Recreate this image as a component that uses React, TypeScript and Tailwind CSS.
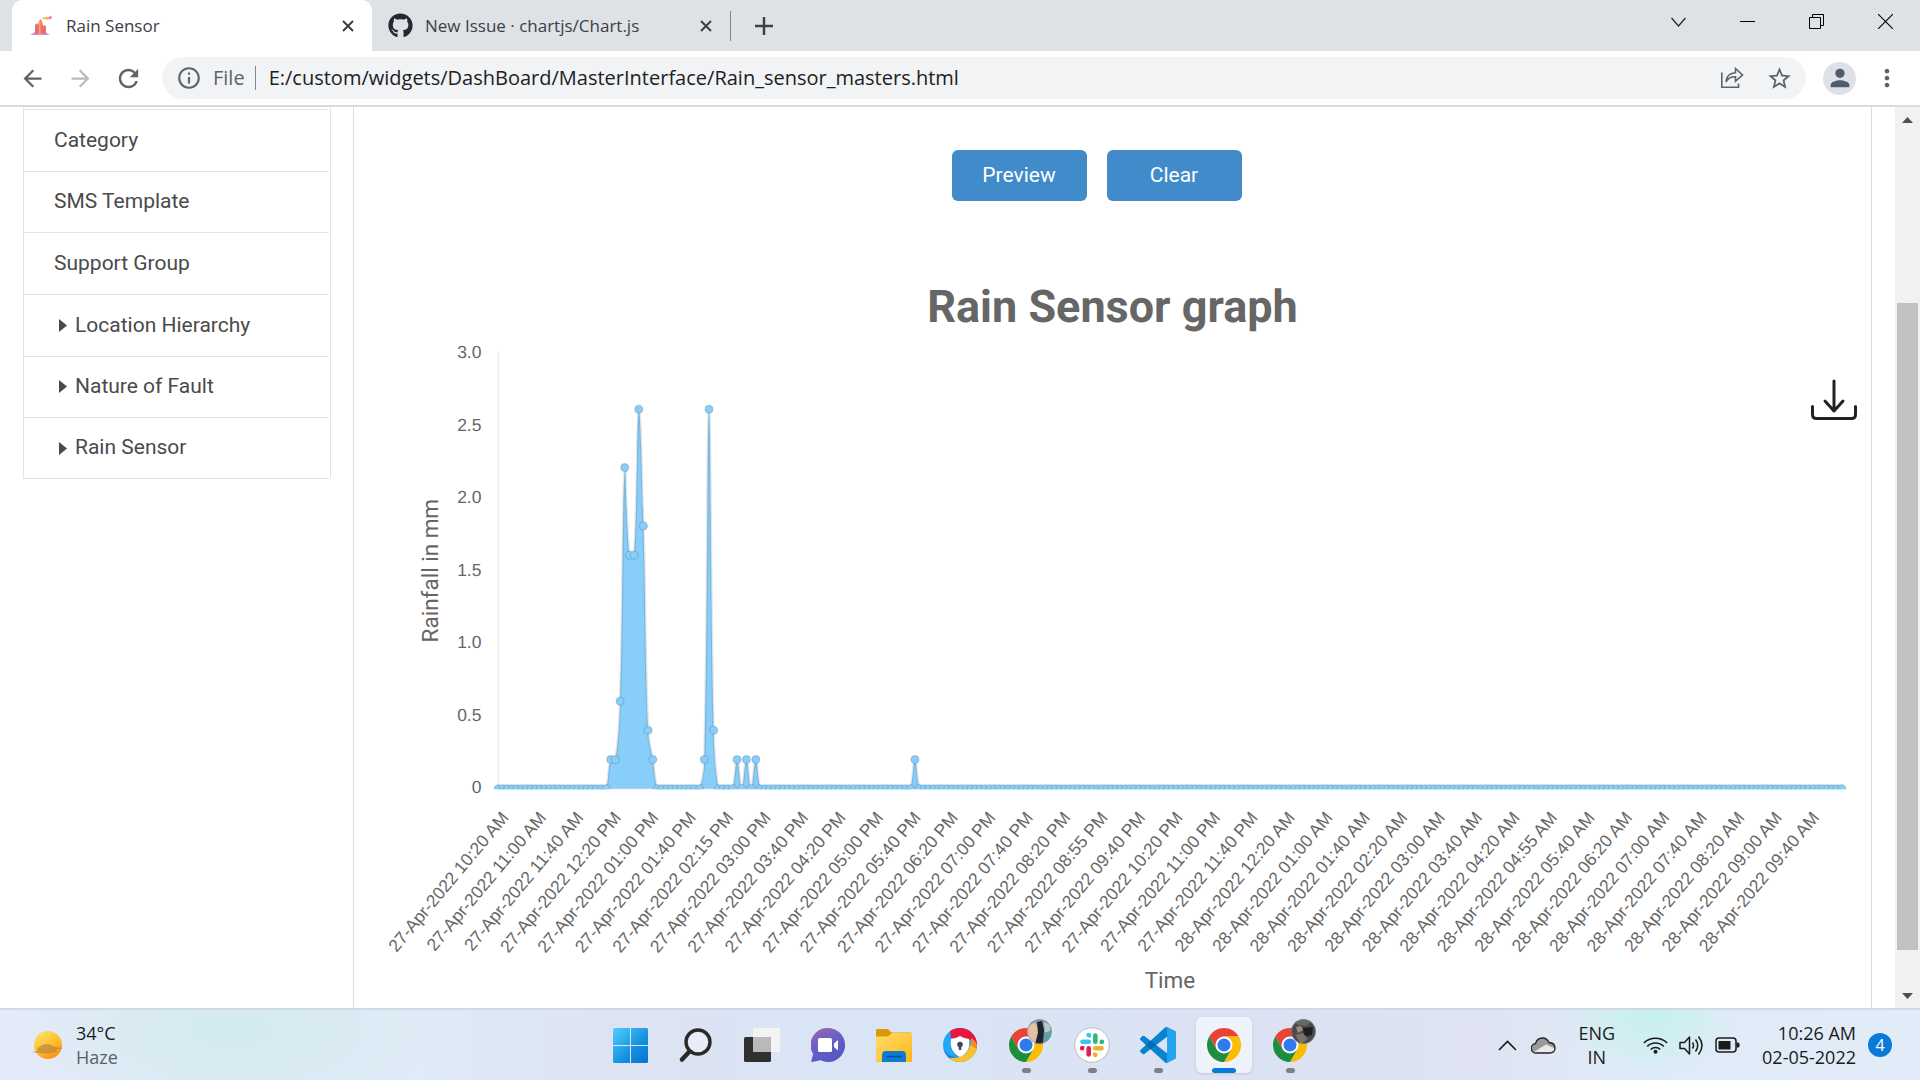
import type { ReactNode } from 'react';
import {
  MdArrowBack,
  MdArrowForward,
  MdInfoOutline,
  MdMoreVert,
  MdPerson,
  MdRefresh,
  MdStarBorder,
} from 'react-icons/md';
import { FaGithub } from 'react-icons/fa';

// --- Chart data ---

const POINT_COUNT = 288;

const readings: Record<number, number> = {
  24: 0.2, 25: 0.2, 26: 0.6, 27: 2.2, 28: 1.6, 29: 1.6, 30: 2.6, 31: 1.8, 32: 0.4, 33: 0.2,
  44: 0.2, 45: 2.6, 46: 0.4,
  51: 0.2, 53: 0.2, 55: 0.2,
  89: 0.2,
};

const timeLabels = [
  '27-Apr-2022 10:20 AM', '27-Apr-2022 11:00 AM', '27-Apr-2022 11:40 AM', '27-Apr-2022 12:20 PM',
  '27-Apr-2022 01:00 PM', '27-Apr-2022 01:40 PM', '27-Apr-2022 02:15 PM', '27-Apr-2022 03:00 PM',
  '27-Apr-2022 03:40 PM', '27-Apr-2022 04:20 PM', '27-Apr-2022 05:00 PM', '27-Apr-2022 05:40 PM',
  '27-Apr-2022 06:20 PM', '27-Apr-2022 07:00 PM', '27-Apr-2022 07:40 PM', '27-Apr-2022 08:20 PM',
  '27-Apr-2022 08:55 PM', '27-Apr-2022 09:40 PM', '27-Apr-2022 10:20 PM', '27-Apr-2022 11:00 PM',
  '27-Apr-2022 11:40 PM', '28-Apr-2022 12:20 AM', '28-Apr-2022 01:00 AM', '28-Apr-2022 01:40 AM',
  '28-Apr-2022 02:20 AM', '28-Apr-2022 03:00 AM', '28-Apr-2022 03:40 AM', '28-Apr-2022 04:20 AM',
  '28-Apr-2022 04:55 AM', '28-Apr-2022 05:40 AM', '28-Apr-2022 06:20 AM', '28-Apr-2022 07:00 AM',
  '28-Apr-2022 07:40 AM', '28-Apr-2022 08:20 AM', '28-Apr-2022 09:00 AM', '28-Apr-2022 09:40 AM',
];

const yTicks = ['3.0', '2.5', '2.0', '1.5', '1.0', '0.5', '0'];

const LEFT = 115.5;
const STEP = 3.746;
const TOP = 63.5;
const BOTTOM = 413.5;
const UNIT = 116.8;

interface Point {
  x: number;
  y: number;
}

const points: Point[] = Array.from({ length: POINT_COUNT }, (_, i) => ({
  x: LEFT + i * STEP,
  y: BOTTOM - (readings[i] ?? 0) * UNIT,
}));

// Control points of a cardinal spline, kept inside the chart area
function controls(prev: Point, cur: Point, next: Point, tension = 0.4) {
  const d01 = Math.hypot(cur.x - prev.x, cur.y - prev.y);
  const d12 = Math.hypot(next.x - cur.x, next.y - cur.y);
  const fa = d01 + d12 ? (tension * d01) / (d01 + d12) : 0;
  const fb = d01 + d12 ? (tension * d12) / (d01 + d12) : 0;
  const clamp = (y: number) => Math.min(BOTTOM, Math.max(TOP, y));
  return {
    before: { x: cur.x - fa * (next.x - prev.x), y: clamp(cur.y - fa * (next.y - prev.y)) },
    after: { x: cur.x + fb * (next.x - prev.x), y: clamp(cur.y + fb * (next.y - prev.y)) },
  };
}

function buildLine(pts: Point[]): string {
  const ctl = pts.map((p, i) => controls(pts[i - 1] ?? p, p, pts[i + 1] ?? p));
  return pts
    .map((p, i) => {
      if (i === 0) return `M${p.x} ${p.y}`;
      const a = ctl[i - 1].after;
      const b = ctl[i].before;
      return `C${a.x} ${a.y} ${b.x} ${b.y} ${p.x} ${p.y}`;
    })
    .join('');
}

const linePath = buildLine(points);

const RainChart = () => (
  <svg
    viewBox="0 0 1214 589"
    textRendering="geometricPrecision"
    className="block w-full"
    role="img"
    aria-label="Rain Sensor graph"
  >
    <defs>
      <clipPath id="plot">
        <rect x="100" y="0" width="1114" height={BOTTOM + 0.5} />
      </clipPath>
    </defs>
    <text x="607" y="40" textAnchor="middle" className="fill-[#666666] font-['Roboto',sans-serif] text-[36px] font-bold">
      Rain Sensor graph
    </text>
    <path d={`M${LEFT} ${TOP}V${BOTTOM}`} stroke="#000" strokeOpacity="0.1" />
    <path d={`M${LEFT} ${BOTTOM}H1190`} stroke="#000" strokeOpacity="0.1" />
    {yTicks.map((tick, i) => (
      <text
        key={tick}
        x="102"
        y={69 + i * 58}
        textAnchor="end"
        className="fill-[#666666] font-['Liberation_Sans',sans-serif] text-[14px]"
      >
        {tick}
      </text>
    ))}
    <g clipPath="url(#plot)">
      <path d={`${linePath}V${BOTTOM}H${LEFT}Z`} fill="#87cefa" />
      <path d={linePath} fill="none" stroke="#000" strokeOpacity="0.1" strokeWidth="2" />
      {points.map((p, i) => (
        <circle key={i} cx={p.x} cy={p.y} r="3.2" fill="#87cefa" stroke="#000" strokeOpacity="0.13" />
      ))}
    </g>
    {timeLabels.map((label, i) => (
      <text
        key={label}
        textAnchor="end"
        transform={`translate(${124.5 + i * STEP * 8} 437) rotate(-50)`}
        className="fill-[#666666] font-['Liberation_Sans',sans-serif] text-[14px]"
      >
        {label}
      </text>
    ))}
    <text
      textAnchor="middle"
      transform="translate(67 239) rotate(-90)"
      className="fill-[#666666] font-['Roboto',sans-serif] text-[18px]"
    >
      Rainfall in mm
    </text>
    <text x="653" y="573" textAnchor="middle" className="fill-[#666666] font-['Roboto',sans-serif] text-[18px]">
      Time
    </text>
  </svg>
);

// --- Browser chrome ---

const CloseGlyph = () => (
  <svg width="12" height="12" viewBox="0 0 12 12" fill="none" stroke="#3c4043" strokeWidth="2">
    <path d="M1 1l10 10M11 1L1 11" />
  </svg>
);

const CastleIcon = () => (
  <svg width="24" height="24" viewBox="0 0 24 24">
    <path d="M0 21c3-1 3-3 6-3h9c2 0 2 2 5 3z" fill="#c79ad6" />
    <path d="M5 20V11l2-2 1 2 1-4 2-2 1 3 1 4 2-1 1 2v7z" fill="#f0706a" />
    <path d="M9 20V8l1.500-2v14z" fill="#f9a856" />
    <path d="M5 20v-6l1.500-1v7zM13.500 20v-7l1.500 1v6z" fill="#dc6a9c" />
    <path d="M12 4l5-1 2 .5 3-.5-1 2-3 .5-5-.5z" fill="#f7b23c" />
    <path d="M17 3.500l5-2-1 4z" fill="#e08cba" />
  </svg>
);

const TabStrip = () => (
  <header className="flex h-[51px] shrink-0 items-stretch bg-[#dee1e6] pl-3 font-['Open_Sans','Noto_Sans',sans-serif] text-[17px] text-[#3c4043]">
    <div className="flex w-[360px] items-center rounded-t-[10px] bg-white px-[18px]">
      <CastleIcon />
      <span className="ml-3 flex-1">Rain Sensor</span>
      <button type="button" aria-label="Close Rain Sensor">
        <CloseGlyph />
      </button>
    </div>
    <div className="flex w-[358px] items-center pr-[18px] pl-4">
      <FaGithub size={25} className="text-[#24292f]" />
      <span className="ml-3 flex-1">New Issue · chartjs/Chart.js</span>
      <button type="button" aria-label="Close New Issue">
        <CloseGlyph />
      </button>
    </div>
    <div className="my-auto h-[30px] w-px bg-[#80868b]" />
    <button type="button" aria-label="New tab" className="ml-6">
      <svg width="18" height="18" viewBox="0 0 18 18" stroke="#3c4043" strokeWidth="2.4">
        <path d="M9 0v18M0 9h18" />
      </svg>
    </button>
    <div className="ml-auto flex items-center gap-[54px] pr-[27px] pb-2">
      <button type="button" aria-label="Search tabs">
        <svg width="15" height="15" viewBox="0 0 15 15" fill="none" stroke="#222" strokeWidth="1.2">
          <path d="M.5 4l7 8 7-8" />
        </svg>
      </button>
      <button type="button" aria-label="Minimize">
        <svg width="15" height="15" viewBox="0 0 15 15" fill="none" stroke="#000">
          <path d="M0 7.5h15" />
        </svg>
      </button>
      <button type="button" aria-label="Restore">
        <svg width="15" height="15" viewBox="0 0 15 15" fill="none" stroke="#000">
          <path d="M.5 3.5h11v11h-11zM3.5 3.500v-3h11v11h-3" />
        </svg>
      </button>
      <button type="button" aria-label="Close window">
        <svg width="15" height="15" viewBox="0 0 15 15" fill="none" stroke="#000" strokeWidth="1.1">
          <path d="M0 0l15 15M15 0L0 15" />
        </svg>
      </button>
    </div>
  </header>
);

const Toolbar = () => (
  <div className="flex h-14 shrink-0 items-center border-b-2 border-[#dadbdd] bg-white pl-[19px] font-['Open_Sans','Noto_Sans',sans-serif] text-[20px] text-[#5f6368]">
    <button type="button" aria-label="Back">
      <MdArrowBack size={27} />
    </button>
    <button type="button" aria-label="Forward" className="ml-[21px] text-[#babcbe]">
      <MdArrowForward size={27} />
    </button>
    <button type="button" aria-label="Reload" className="ml-5">
      <MdRefresh size={29} />
    </button>
    <div className="ml-[19px] flex h-[42px] flex-1 items-center rounded-full bg-[#f1f3f4] pr-[13px] pl-[14px]">
      <MdInfoOutline size={26} />
      <label htmlFor="url" className="ml-[11px]">
        File
      </label>
      <div className="ml-[10px] h-6 w-px bg-[#80868b]" />
      <input
        id="url"
        className="ml-[13px] min-w-0 flex-1 bg-transparent text-[#202124] outline-none"
        defaultValue="E:/custom/widgets/DashBoard/MasterInterface/Rain_sensor_masters.html"
      />
      <button type="button" aria-label="Share">
        <svg width="24" height="24" viewBox="0 0 24 24" fill="none" stroke="#5f6368" strokeWidth="1.6">
          <path d="M1.8 6.500V21.200H18.500V17.500" />
          <path d="M6 16c.5-6 4-9 9.500-9.200V2.500L22.500 9l-7 6.200v-4.500C11 10.500 8 12 6 16z" />
        </svg>
      </button>
      <button type="button" aria-label="Bookmark" className="ml-[22px]">
        <MdStarBorder size={27} />
      </button>
    </div>
    <button
      type="button"
      aria-label="Profile"
      className="ml-[17px] flex size-[33px] items-center justify-center rounded-full bg-[#dee1e6] text-[#505b70]"
    >
      <MdPerson size={28} />
    </button>
    <button type="button" aria-label="Menu" className="mr-[19px] ml-[17px]">
      <MdMoreVert size={28} />
    </button>
  </div>
);

// --- Page ---

const menu = [
  { label: 'Category' },
  { label: 'SMS Template' },
  { label: 'Support Group' },
  { label: 'Location Hierarchy', expandable: true },
  { label: 'Nature of Fault', expandable: true },
  { label: 'Rain Sensor', expandable: true },
];

const Sidebar = () => (
  <nav className="w-[353px] shrink-0 pl-[23px]">
    <ul className="grid h-[372px] w-[308px] auto-rows-fr border-x border-[#e3e3e3] pt-[2px] pr-px">
      {menu.map(({ label, expandable }) => (
        <li key={label} className="border-t border-[#e3e3e3] last:border-b">
          <a href="#" className="flex h-full items-center pl-[30px] text-[21px] text-[#4a4a4a]">
            {expandable && (
              <svg width="8" height="13" viewBox="0 0 8 13" className="mr-2 ml-[5px]">
                <path d="M0 0l8 6.500L0 13z" fill="#4a4a4a" />
              </svg>
            )}
            {label}
          </a>
        </li>
      ))}
    </ul>
  </nav>
);

const ActionButton = ({ children }: { children: ReactNode }) => (
  <button type="button" className="h-[51px] w-[135px] rounded-md bg-[#428bca] text-[21px] text-white">
    {children}
  </button>
);

const Scrollbar = () => (
  <div className="flex w-[25px] shrink-0 flex-col items-center bg-[#f1f1f1]">
    <svg width="11" height="6" viewBox="0 0 11 6" className="mt-[10px]">
      <path d="M0 6l5.500-6L11 6z" fill="#505050" />
    </svg>
    <div className="mt-[180px] mb-[43px] w-[21px] flex-1 bg-[#c1c1c1]" />
    <svg width="11" height="6" viewBox="0 0 11 6" className="mb-[9px]">
      <path d="M0 0l5.500 6L11 0z" fill="#505050" />
    </svg>
  </div>
);

const Page = () => (
  <div className="flex min-h-0 flex-1 overflow-hidden bg-white font-['Roboto',sans-serif]">
    <Sidebar />
    <main className="relative min-w-0 flex-1 border-x border-[#dcdcdc]">
      <div className="flex justify-center gap-5 pt-[43px] pr-8">
        <ActionButton>Preview</ActionButton>
        <ActionButton>Clear</ActionButton>
      </div>
      <div className="mt-[71px]">
        <RainChart />
      </div>
      <button type="button" aria-label="Download" className="absolute top-[271px] right-[13px]">
        <svg width="48" height="44" viewBox="0 0 48 44" fill="none" stroke="#222" strokeWidth="3" strokeLinecap="round" strokeLinejoin="round">
          <path d="M24 3v30M15 23l9 10 9-10" />
          <path d="M2.500 28.500v8q0 4 4 4h35q4 0 4-4v-8" />
        </svg>
      </button>
    </main>
    <div className="w-[23px] shrink-0" />
    <Scrollbar />
  </div>
);

// --- Taskbar ---

const ChromeIcon = () => (
  <svg width="34" height="34" viewBox="0 0 48 48">
    <path d="M24 12H44.780A24 24 0 0 0 3.220 12L13.610 30A12 12 0 0 1 24 12z" fill="#ea4335" />
    <path d="M34.390 30L24 48A24 24 0 0 0 44.780 12H24A12 12 0 0 1 34.390 30z" fill="#fbbc05" />
    <path d="M13.610 30L3.220 12A24 24 0 0 0 24 48L34.390 30A12 12 0 0 1 13.610 30z" fill="#1e8e3e" />
    <circle cx="24" cy="24" r="11.5" fill="#fff" />
    <circle cx="24" cy="24" r="9.2" fill="#2f7bed" />
  </svg>
);

const StartIcon = () => (
  <svg width="35" height="35" viewBox="0 0 35 35">
    <defs>
      <linearGradient id="start" x1="0" y1="0" x2="1" y2="1">
        <stop offset="0" stopColor="#4fd0ff" />
        <stop offset="0.6" stopColor="#1590e0" />
        <stop offset="1" stopColor="#0573d0" />
      </linearGradient>
    </defs>
    <path
      d="M1.500 0H17v17H0V1.500A1.500 1.500 0 0 1 1.500 0zM18 0h15.500A1.500 1.500 0 0 1 35 1.500V17H18zM0 18h17v17H1.500A1.500 1.500 0 0 1 0 33.500zM18 18h17v15.500a1.500 1.500 0 0 1-1.500 1.500H18z"
      fill="url(#start)"
    />
  </svg>
);

const SearchIcon = () => (
  <svg width="34" height="34" viewBox="0 0 34 34" fill="none" stroke="#2a2a2a" strokeLinecap="round">
    <circle cx="19" cy="14" r="12" strokeWidth="3.4" fill="#fff" fillOpacity="0.35" />
    <path d="M10 24l-7 7.500" strokeWidth="4.5" />
  </svg>
);

const TaskViewIcon = () => (
  <svg width="36" height="34" viewBox="0 0 36 34">
    <rect x="0" y="9" width="27" height="25" rx="1.5" fill="#30302f" />
    <rect x="9" y="0" width="27" height="24" rx="1.5" fill="#f3f3f3" />
    <path d="M9 9h18v15H10.500A1.500 1.500 0 0 1 9 22.500z" fill="#b9b9b9" />
  </svg>
);

const TeamsIcon = () => (
  <svg width="34" height="34" viewBox="0 0 34 34">
    <defs>
      <linearGradient id="teams" x1="0" y1="0" x2="0.5" y2="1">
        <stop offset="0" stopColor="#a06aa6" />
        <stop offset="0.5" stopColor="#6a5fc8" />
        <stop offset="1" stopColor="#5558c4" />
      </linearGradient>
    </defs>
    <path d="M17 0a17 17 0 1 1-7.500 32.200L1 34q-1 0-.7-1.200L2.200 26A17 17 0 0 1 17 0z" fill="url(#teams)" />
    <rect x="7" y="10" width="14" height="14" rx="1.5" fill="#fff" />
    <path d="M23 15.500l4-3.500v10.500l-4-3.500z" fill="#fff" />
  </svg>
);

const FolderIcon = () => (
  <svg width="36" height="34" viewBox="0 0 36 34">
    <defs>
      <linearGradient id="folder" x1="0" y1="0" x2="1" y2="1">
        <stop offset="0" stopColor="#ffdc6e" />
        <stop offset="1" stopColor="#fdb813" />
      </linearGradient>
    </defs>
    <path d="M1.500 1H12l3.500 3.500H34.500A1.500 1.500 0 0 1 36 6v4H0V2.500A1.500 1.500 0 0 1 1.500 1z" fill="#dc9b06" />
    <path d="M0 8.500h12L16 5h20v29H0z" fill="url(#folder)" />
    <path d="M6 34v-7a4 4 0 0 1 4-4h16a4 4 0 0 1 4 4v7z" fill="#0f7bd0" />
    <path d="M11 28.500h14" stroke="#0a4c93" strokeWidth="1.6" strokeLinecap="round" />
  </svg>
);

const LockBrowserIcon = () => (
  <svg width="34" height="34" viewBox="0 0 34 34">
    <clipPath id="lock-disc">
      <circle cx="17" cy="17" r="17" />
    </clipPath>
    <g clipPath="url(#lock-disc)">
      <path d="M0 0h34v34H0z" fill="#22a6f5" />
      <path d="M0 20q4 9 13 9l8 5H0z" fill="#1580e0" />
      <path d="M7 3L10 0h24v20l-6-8-20-2z" fill="#e8173f" />
      <path d="M28 10q8 4 6 14H25q4-7 3-14z" fill="#f58a2a" />
      <path d="M7 30q17 1 20-13l7 4v13H7z" fill="#fcc02e" />
    </g>
    <path d="M8 11q5-.5 9-3 4 2.500 9 3 2 13-9 18Q6 23 8 11z" fill="#fff" />
    <circle cx="17" cy="16.5" r="2.8" fill="#3b4660" />
    <path d="M15.800 17h2.400v5h-2.400z" fill="#3b4660" />
  </svg>
);

const SlackIcon = () => (
  <svg width="36" height="36" viewBox="0 0 36 36">
    <circle cx="18" cy="18" r="17.3" fill="#fff" stroke="#b9bcc4" />
    <g strokeWidth="4.6" strokeLinecap="round">
      <path d="M8.500 14.700h6.200" stroke="#36c5f0" />
      <path d="M21.300 8.500v6.200" stroke="#2eb67d" />
      <path d="M27.500 21.300h-6.200" stroke="#ecb22e" />
      <path d="M14.700 27.500v-6.200" stroke="#e01e5a" />
    </g>
    <path d="M17 10.400h-2.300a2.300 2.300 0 1 1 2.300-2.300z" fill="#36c5f0" />
    <path d="M25.600 17v-2.300a2.300 2.300 0 1 1 2.300 2.300z" fill="#2eb67d" />
    <path d="M19 25.600h2.300a2.300 2.300 0 1 1-2.300 2.300z" fill="#ecb22e" />
    <path d="M10.400 19v2.300A2.300 2.300 0 1 1 8.100 19z" fill="#e01e5a" />
  </svg>
);

const CodeIcon = () => (
  <svg width="36" height="36" viewBox="0 0 24 24">
    <path
      d="M23.150 2.587L18.210.210a1.494 1.494 0 0 0-1.705.290l-9.460 8.630-4.120-3.128a.999.999 0 0 0-1.276.057L.327 7.261A1 1 0 0 0 .326 8.740L3.899 12 .326 15.260a1 1 0 0 0 .001 1.479L1.650 17.940a.999.999 0 0 0 1.276.057l4.120-3.128 9.460 8.630a1.492 1.492 0 0 0 1.704.290l4.942-2.377A1.500 1.500 0 0 0 24 20.060V3.939a1.500 1.500 0 0 0-.850-1.352zm-5.146 14.861L10.826 12l7.178-5.448v10.896z"
      fill="#0a84cf"
    />
    <path d="M3.900 12L7.050 9.130 10.830 12l-3.780 2.870z" fill="#0667ad" />
    <path d="M18 .15l5.150 2.437A1.500 1.500 0 0 1 24 3.939V20.060a1.500 1.500 0 0 1-.850 1.352L18 23.850z" fill="#24a4f0" />
  </svg>
);

// Small profile picture over the top right corner of a browser icon
const ProfileBadge = ({ dark }: { dark?: boolean }) => (
  <svg width="25" height="25" viewBox="0 0 25 25" className="absolute -top-[9px] -right-[9px]">
    <clipPath id={dark ? 'profile-dark' : 'profile-light'}>
      <circle cx="12.5" cy="12.5" r="12.2" />
    </clipPath>
    {dark ? (
      <g clipPath="url(#profile-dark)">
        <path d="M0 0h25v25H0z" fill="#4a4a4c" />
        <path d="M2 3l8-3 10 2-4 5-8-1z" fill="#66686b" />
        <path d="M5 8l5-1 2 4-5 3z" fill="#a08c76" />
        <path d="M12 9l10-1-1 8-8 2z" fill="#1f1f22" />
        <path d="M4 16l8-2 5 6-7 5z" fill="#77726d" />
      </g>
    ) : (
      <g clipPath="url(#profile-light)">
        <path d="M0 0h25v25H0z" fill="#7e9ba6" />
        <path d="M0 8l8-5 3 6-1 16H0z" fill="#e3c1a3" />
        <path d="M10 3l5-1 2 9-1 14H8l3-11z" fill="#1d2430" />
        <path d="M17 3l7 3-1 6-5 2z" fill="#b9cbd0" />
        <path d="M17 14l7-2v8l-6 3z" fill="#5ba0a6" />
      </g>
    )}
    <circle cx="12.5" cy="12.5" r="12" fill="none" stroke="#8d9096" strokeOpacity="0.6" />
  </svg>
);

interface TaskItem {
  name: string;
  icon: ReactNode;
  running?: boolean;
  active?: boolean;
}

const taskItems: TaskItem[] = [
  { name: 'Start', icon: <StartIcon /> },
  { name: 'Search', icon: <SearchIcon /> },
  { name: 'Task View', icon: <TaskViewIcon /> },
  { name: 'Chat', icon: <TeamsIcon /> },
  { name: 'File Explorer', icon: <FolderIcon /> },
  { name: 'Lock Browser', icon: <LockBrowserIcon /> },
  { name: 'Chrome profile 1', icon: <><ChromeIcon /><ProfileBadge /></>, running: true },
  { name: 'Slack', icon: <SlackIcon />, running: true },
  { name: 'Visual Studio Code', icon: <CodeIcon />, running: true },
  { name: 'Chrome', icon: <ChromeIcon />, active: true },
  { name: 'Chrome profile 2', icon: <><ChromeIcon /><ProfileBadge dark /></>, running: true },
];

const TaskButton = ({ name, icon, running, active }: TaskItem) => (
  <button
    type="button"
    aria-label={name}
    className={`relative flex size-14 items-center justify-center rounded-md ${active ? 'bg-[#eef2fb] shadow-sm' : ''}`}
  >
    <span className="relative">{icon}</span>
    {running && <span className="absolute bottom-0 h-[5px] w-[9px] rounded-full bg-[#7c808a]" />}
    {active && <span className="absolute bottom-0 h-[5px] w-6 rounded-full bg-[#0a7ad8]" />}
  </button>
);

const WeatherIcon = () => (
  <svg width="32" height="32" viewBox="0 0 32 32">
    <defs>
      <linearGradient id="sun" x1="0.2" y1="0" x2="0.8" y2="1">
        <stop offset="0" stopColor="#ffe066" />
        <stop offset="0.5" stopColor="#ffc030" />
        <stop offset="1" stopColor="#ff8a0c" />
      </linearGradient>
    </defs>
    <circle cx="16" cy="16" r="14" fill="url(#sun)" />
    <path d="M7 18q7-6 16 0l8 1q-3 2-8 1 3 1 1 3-8 3-24 0 3-1 6-1-2-2 1-4z" fill="#c08a3e" fillOpacity="0.75" />
  </svg>
);

const Taskbar = () => (
  <footer className="grid h-[72px] shrink-0 grid-cols-[1fr_auto_1fr] items-center bg-[radial-gradient(ellipse_90px_70px_at_1650px_0px,#c3f1ec,transparent),radial-gradient(ellipse_200px_90px_at_230px_20px,#d2eaf0,transparent),linear-gradient(90deg,#e2ebf7,#dfebf6_22%,#dde3f3_32%,#d9e5f5_45%,#dbe2f3_65%,#dfe3f1_77%,#dfebf7_84%,#e1ecf8)] pt-[2px] font-['Open_Sans','Noto_Sans',sans-serif] text-[18px] leading-6 text-[#1b1b1b] shadow-[inset_0_2px_0_#d0d8e5]">
    <div className="flex items-center gap-3 pl-8">
      <WeatherIcon />
      <div>
        <p>34°C</p>
        <p className="text-[#5b6066]">Haze</p>
      </div>
    </div>
    <div className="flex gap-[10px]">
      {taskItems.map((item) => (
        <TaskButton key={item.name} {...item} />
      ))}
    </div>
    <div className="flex items-center justify-end pr-7">
      <svg width="19" height="11" viewBox="0 0 19 11" fill="none" stroke="#1b1b1b" strokeWidth="1.6">
        <path d="M1 10l8.500-8.500L18 10" />
      </svg>
      <svg width="25" height="17" viewBox="0 0 25 17" className="ml-[14px]">
        <path d="M5.500 16a4.700 4.700 0 0 1-1-9.400Q6 1 11.500 1q4.500 0 6.500 4.500 6 .5 6 5.500 0 5-5.500 5z" fill="#9b9b9b" />
        <path d="M3 15l12-7.500 9 4q-.5 4.500-5.500 4.500h-13z" fill="#e9e9e9" />
        <path d="M5.500 16a4.700 4.700 0 0 1-1-9.400Q6 1 11.500 1q4.500 0 6.500 4.500 6 .5 6 5.500 0 5-5.500 5z" fill="none" stroke="#222" strokeWidth="1.3" />
      </svg>
      <p className="ml-[22px] text-center">
        ENG
        <br />
        IN
      </p>
      <svg width="25" height="18" viewBox="0 0 25 18" fill="none" stroke="#1b1b1b" strokeWidth="1.5" className="ml-7">
        <path d="M.8 7a16.500 16.500 0 0 1 23.400 0M4.200 10.500a11.700 11.700 0 0 1 16.600 0M7.700 13.500a6.800 6.800 0 0 1 9.600 0" />
        <circle cx="12.5" cy="15.7" r="2" fill="#1b1b1b" stroke="none" />
      </svg>
      <svg width="25" height="21" viewBox="0 0 25 21" fill="none" stroke="#1b1b1b" strokeWidth="1.5" className="ml-[11px]">
        <path d="M1 7.500h4.500L10.500 2v17l-5-5.500H1z" strokeLinejoin="round" />
        <path d="M13.500 7.500q2 3 0 6M16.500 4.500q4.500 6 0 12M19.500 1.500q7 9 0 18" />
      </svg>
      <svg width="25" height="16" viewBox="0 0 25 16" className="ml-[11px]">
        <rect x="1" y="1" width="20" height="14" rx="3" fill="none" stroke="#1b1b1b" strokeWidth="1.5" />
        <rect x="3.5" y="4" width="12" height="8.5" fill="#1b1b1b" />
        <path d="M21.500 5.500h1.500a1.500 1.500 0 0 1 1.500 1.500v2a1.500 1.500 0 0 1-1.500 1.500h-1.500z" fill="#1b1b1b" />
      </svg>
      <p className="ml-[22px] text-right">
        10:26 AM
        <br />
        02-05-2022
      </p>
      <span className="ml-3 flex size-6 items-center justify-center rounded-full bg-[#0a7ad8] text-base text-white">4</span>
    </div>
  </footer>
);

export default function App() {
  return (
    <div className="flex h-screen flex-col overflow-hidden">
      <TabStrip />
      <Toolbar />
      <Page />
      <Taskbar />
    </div>
  );
}
